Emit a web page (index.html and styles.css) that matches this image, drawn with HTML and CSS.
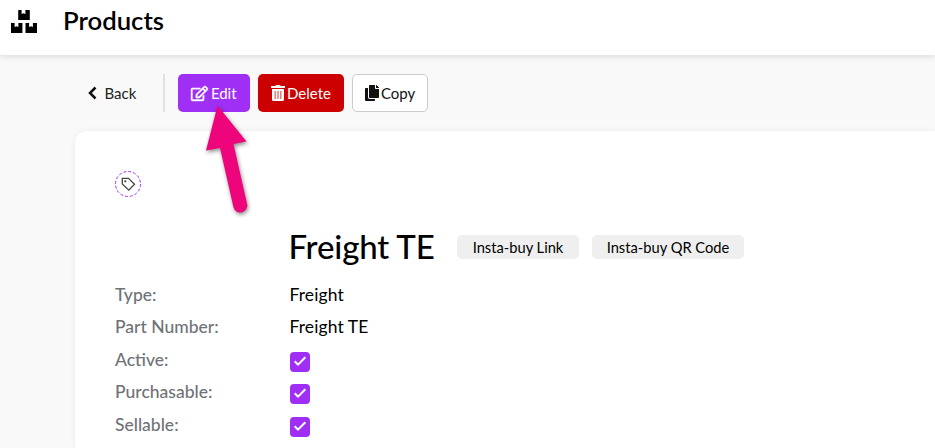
FILE: index.html
```html
<!DOCTYPE html>
<html lang="en">
<head>
<meta charset="utf-8">
<title>Products</title>
<link rel="stylesheet" href="styles.css">
</head>
<body>
<header class="topbar">
  <svg class="boxes" viewBox="0 0 26 24"><path d="M7.200 0h3.400v4l1.900-.8 1.900.8V0h4.400v10H7.200zM0 13h3.600v4l1.900-.8 1.900.8v-4h4v10H0zM14.500 13h3.600v4l1.900-.8 1.900.8v-4H26v10H14.500z"/></svg>
  <h1 class="page-title">Products</h1>
</header>
<nav class="toolbar">
  <a class="back"><svg class="chevron" viewBox="0 0 9 14"><path d="M7.500 1.500 2 7l5.500 5.500"/></svg><span>Back</span></a>
  <button class="btn btn-edit"><svg viewBox="0 0 576 512"><path d="M402.300 344.900l32-32c5-5 13.700-1.500 13.700 5.700V464c0 26.500-21.500 48-48 48H48c-26.500 0-48-21.500-48-48V112c0-26.500 21.500-48 48-48h273.500c7.100 0 10.700 8.600 5.700 13.700l-32 32c-1.500 1.500-3.500 2.300-5.700 2.300H48v352h352V350.500c0-2.100.8-4.100 2.300-5.600zm156.600-201.800L296.300 405.700l-90.400 10c-26.200 2.900-48.500-19.200-45.600-45.600l10-90.400L432.900 17.100c22.900-22.900 59.900-22.900 82.700 0l43.200 43.200c22.900 22.900 22.900 60 .1 82.800zM460.100 174L402 115.900 216.200 301.800l-7.300 65.300 65.300-7.300L460.100 174zm64.800-79.700l-43.200-43.200c-4.100-4.100-10.800-4.100-14.800 0L436 82l58.100 58.100 30.900-30.900c4-4.200 4-10.800-.1-14.900z"/></svg><span>Edit</span></button>
  <button class="btn btn-delete"><svg viewBox="0 0 14 16"><path fill-rule="evenodd" d="M4.300 1 5 0h4l.7 1H14v2H0V1zM1 4h12v10.500c0 .8-.7 1.500-1.500 1.500h-9C1.700 16 1 15.300 1 14.500zM3.700 6v8h.8V6zm2.900 0v8h.8V6zm2.900 0v8h.8V6z"/></svg><span>Delete</span></button>
  <button class="btn btn-copy"><svg viewBox="0 0 448 512"><path d="M320 448v40c0 13.255-10.745 24-24 24H24c-13.255 0-24-10.745-24-24V120c0-13.255 10.745-24 24-24h72v296c0 30.879 25.121 56 56 56h168zm0-344V0H152c-13.255 0-24 10.745-24 24v368c0 13.255 10.745 24 24 24h272c13.255 0 24-10.745 24-24V128H344c-13.200 0-24-10.800-24-24zm120.971-31.029L375.029 7.029A24 24 0 0 0 358.059 0H352v96h96v-6.059a24 24 0 0 0-7.029-16.970z"/></svg><span>Copy</span></button>
</nav>
<main class="card">
  <svg class="tag" viewBox="0 0 26 26"><circle cx="13" cy="13" r="12.500"/><path d="M7.300 7.300h6.200l6 6-5.700 5.800-6.500-6.200z"/><circle class="hole" cx="10.300" cy="10.300" r="1.100"/></svg>
  <div class="heading">
    <h2 class="name">Freight TE</h2>
    <a class="chip chip-link">Insta-buy Link</a>
    <a class="chip chip-qr">Insta-buy QR Code</a>
  </div>
  <dl class="fields">
    <dt>Type:</dt><dd>Freight</dd>
    <dt>Part Number:</dt><dd>Freight TE</dd>
    <dt>Active:</dt><dd><svg class="check" viewBox="0 0 20 20"><path d="M4.700 9.300 8 12.600 15.300 5.200"/></svg></dd>
    <dt>Purchasable:</dt><dd><svg class="check" viewBox="0 0 20 20"><path d="M4.700 9.300 8 12.600 15.300 5.200"/></svg></dd>
    <dt>Sellable:</dt><dd><svg class="check" viewBox="0 0 20 20"><path d="M4.700 9.300 8 12.600 15.300 5.200"/></svg></dd>
  </dl>
</main>
<svg class="pointer" viewBox="0 0 80 125"><path d="M27.500 10.500 56.500 46.500l-13 2.500L57 108.500a7 7 0 0 1-13.500 4L30 53 16 55.500z"/></svg>
</body>
</html>
```
FILE: styles.css
```css
* { box-sizing: border-box; }
body {
  margin: 0;
  height: 448px;
  overflow: hidden;
  background: #f9f9f9;
  color: #000;
  font-family: Lato, sans-serif;
}
h1, h2, dl, dd { margin: 0; }
.topbar {
  display: flex;
  align-items: flex-start;
  height: 55px;
  padding: 10px 0 0 11px;
  background: #fff;
  box-shadow: 0 1px 6px rgba(40, 40, 70, .16);
}
.boxes { width: 26px; height: 24px; }
.page-title {
  margin-left: 26px;
  font-size: 25.700px;
  line-height: 21px;
  font-weight: 600;
}
.toolbar {
  display: flex;
  height: 38px;
  margin-top: 19px;
  padding-left: 88px;
  font-size: 15px;
}
.back {
  display: flex;
  align-items: center;
  width: 77px;
  border-right: 2px solid #e2e2e2;
  margin-right: 13px;
  color: #222;
}
.chevron {
  width: 9px;
  height: 14px;
  margin-right: 7.500px;
  fill: none;
  stroke: #111;
  stroke-width: 2.500;
}
.btn {
  display: flex;
  align-items: center;
  padding: 0 0 0 13px;
  margin-right: 8px;
  border: 0;
  border-radius: 5px;
  font: 15px Lato, sans-serif;
  color: #fff;
}
.btn svg { height: 16px; fill: currentColor; margin-right: 2px; }
.btn-edit { width: 72px; background: #a02ff5; }
.btn-edit svg { height: 15px; margin-right: 3px; stroke: currentColor; stroke-width: 14; overflow: visible; }
.btn-delete { width: 86px; background: #c00; }
.btn-copy { width: 76px; background: #fff; color: #111; border: 1px solid #ccc; padding-left: 12px; }
.card {
  height: 317px;
  margin: 19px 0 0 75px;
  padding: 40px 0 0 40px;
  background: #fff;
  border-radius: 12px 0 0 0;
  box-shadow: 0 0 6px rgba(0, 0, 0, .06);
}
.tag { display: block; width: 26px; height: 26px; fill: none; stroke: #444; stroke-width: 1.300; }
.tag circle { stroke: #a02ff5; stroke-width: 1; stroke-dasharray: 3 1.900; }
.tag .hole { fill: #444; stroke: none; }
.heading {
  display: flex;
  align-items: center;
  height: 42px;
  margin-top: 29px;
  padding-left: 173.500px;
}
.name { width: 168.500px; padding-bottom: 2px; font-size: 33px; font-weight: 500; letter-spacing: -.15px; line-height: 40px; white-space: nowrap; }
.chip {
  height: 24px;
  margin-right: 13px;
  border-radius: 5px;
  background: #efefef;
  font-size: 14.700px;
  line-height: 25px;
  text-align: center;
}
.chip-link { width: 122px; }
.chip-qr { width: 152px; }
.fields {
  display: grid;
  grid-template-columns: 174.500px 1fr;
  grid-auto-rows: 32.500px;
  margin-top: 10.600px;
  font-size: 17.500px;
  line-height: 32px;
}
dt { color: #6f7277; font-weight: 500; }
dd { letter-spacing: .1px; }
.check {
  display: block;
  width: 20px;
  height: 20px;
  margin: 8px 0 0 .5px;
  border-radius: 4px;
  background: #a02ff5;
  fill: none;
  stroke: #fff;
  stroke-width: 2;
}
.pointer {
  position: absolute;
  left: 190px;
  top: 95px;
  width: 80px;
  height: 125px;
  fill: #ee047b;
  filter: drop-shadow(1px 2px 2px rgba(0, 0, 0, .45));
}
```
